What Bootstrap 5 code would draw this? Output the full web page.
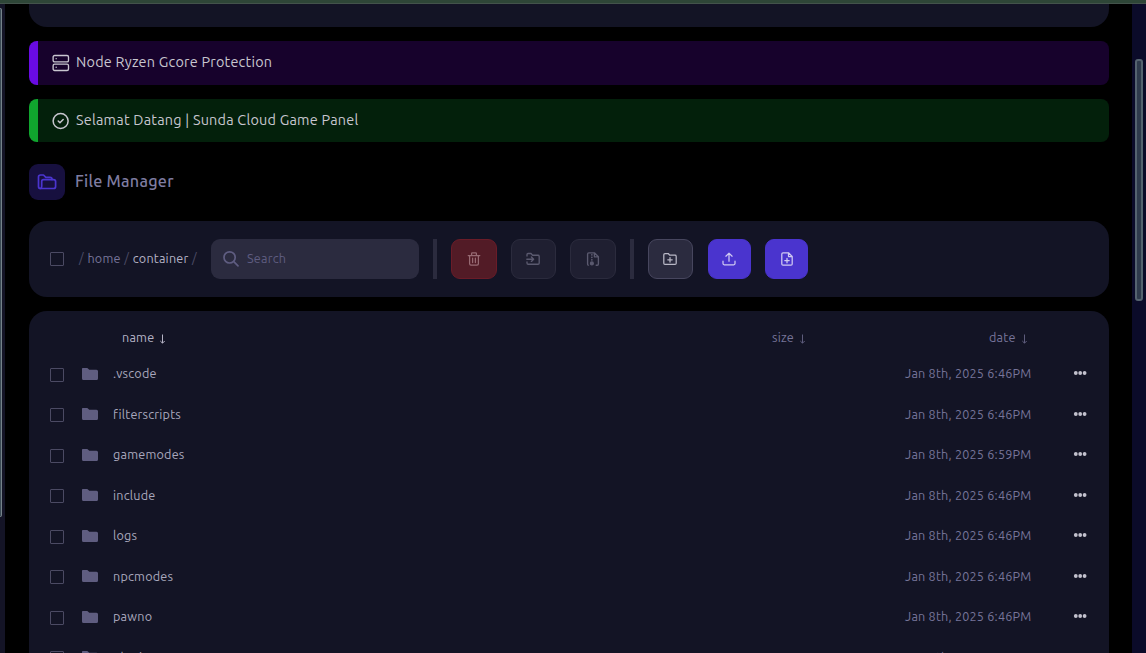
<!DOCTYPE html>
<html lang="en">
<head>
<meta charset="utf-8">
<meta name="viewport" content="width=device-width, initial-scale=1">
<title>File Manager</title>
<link href="https://cdn.jsdelivr.net/npm/bootstrap@5.3.0/dist/css/bootstrap.min.css" rel="stylesheet">
<style>
body{background:#000;font-family:Ubuntu,"Noto Sans","Open Sans",sans-serif;font-size:12.6px;letter-spacing:.216px;color:#a9a8bd;height:653px}
svg{display:block;flex:none}
.ic{fill:none;stroke:currentColor;stroke-width:2;stroke-linecap:round;stroke-linejoin:round}
.topline{height:4px;background:#2e4637;border-bottom:1px solid #43534b}
.rail{width:5px;background:#141426;padding-top:4px}
.rail-thumb{width:2px;height:509px;background:#3b4a55;border:1px solid #76838a;border-left:0;border-radius:0 2px 2px 0}
.scroller{width:14px;background:#0b0b29;padding:55px 3px 0}
.scroller-thumb{width:8px;height:242px;background:#2f3b4c;border:2px solid #55636f;border-radius:3px}
.main-col{padding:0 23px 0 24px}
.panel{background:#131425;border-radius:18px}
.panel-top{height:23px;border-radius:0 0 18px 18px}
.notice{border-left:9px solid;border-radius:8px;padding-left:14px;font-size:14.4px;letter-spacing:.23px;color:#c8c6cf}
.notice-node{height:44px;margin-top:14px;padding-bottom:1px;background:#17022c;border-color:#690be3}
.notice-ok{height:43px;margin-top:14px;background:#03200b;border-color:#10a52e}
.notice .t{margin-left:6px}
.title-row{margin:22px 0 21px}
.title-icon{width:36px;height:36px;border-radius:9px;background:#17103f;color:#4b35cf}
.title-text{font-size:16.2px;font-weight:500;letter-spacing:.25px;color:#7f7da2;margin-left:10px;padding-bottom:2px}
.tools{height:76px;padding-left:21px}
.box{width:14px;height:14px;border:1px solid #4b4a63;border-radius:1px;background:transparent;flex:none}
.crumbs{color:#4d4c66;width:132px;margin-left:15px;padding-bottom:1px;word-spacing:.5px}
.crumbs a{color:#77759a;text-decoration:none}
.crumbs .here{color:#b5b3c5}
.search{width:208px;height:40px;border-radius:9px;background:#2b2b3f;color:#5f5d81}
.search .t{margin-left:7px;padding-bottom:2px}
.bar{width:4px;height:40px;margin-left:14px;background:#2b2b3e}
.tool{height:40px;border-radius:9px;padding:0 1px 0 0;border:1px solid #2b2b3d;background:#1f1f31;color:#5b5a6f;display:flex;align-items:center;justify-content:center;margin-left:14px}
.tool-del{padding:0;background:#521b26;border-color:#6a1c28;color:#976a73}
.tool-new{background:#2b2b3f;border-color:#47465e;color:#b9b8c6}
.tool-go{background:#4a34ce;border-color:#4a34ce;color:#cfc9f2}
.files{height:342px;border-radius:18px 18px 0 0;overflow:hidden;margin-top:14px}
.heads{height:42.3px;padding-top:12px;color:#77759a}
.heads>div{height:30px}
.heads .t{padding-bottom:2px}
.arrow{margin-top:2px}
.file-row{height:40.5px;padding-left:21px;padding-right:22px}
.file-row .box{margin-top:2.4px}
.dots{margin:0 0 1px 41px}
.when{color:#77759a;width:127px;white-space:nowrap}
.t{white-space:nowrap}
</style>
</head>
<body class="d-flex flex-column overflow-hidden">
<svg width="0" height="0" class="position-absolute">
<symbol id="folder" viewBox="0 0 18 14"><path d="M1.7 1H6.3L8.3 2.8H15.5Q17 2.8 17 4.3V11.5Q17 13 15.5 13H2.5Q1 13 1 11.5V2Q1 1 1.7 1Z" fill="#5f5d80"/></symbol>
<symbol id="down" viewBox="0 0 8 10"><path d="M4.5 .5V9M2.3 7L4.5 9.2L6.7 7" fill="none" stroke="currentColor" stroke-width="1"/></symbol>
<symbol id="dots" viewBox="0 0 14 4"><g fill="#c3c2ce"><circle cx="2.8" cy="2" r="1.9"/><circle cx="7.2" cy="2" r="1.9"/><circle cx="11.6" cy="2" r="1.9"/></g></symbol>
</svg>
<div class="topline flex-shrink-0"></div>
<div class="d-flex flex-grow-1">
<aside class="rail"><div class="rail-thumb"></div></aside>
<main class="main-col flex-grow-1">
<div class="panel panel-top"></div>
<div class="notice notice-node d-flex align-items-center">
<svg class="ic" width="18" height="18" viewBox="0 0 24 24" style="stroke-width:1.8"><rect x="1.5" y="2" width="20.5" height="8.5" rx="2"/><rect x="1.5" y="13.5" width="20.5" height="8.5" rx="2"/><path d="M5.5 6.2h.1M5.5 17.7h.1"/></svg>
<span class="t">Node Ryzen Gcore Protection</span></div>
<div class="notice notice-ok d-flex align-items-center">
<svg class="ic" width="18" height="18" viewBox="0 0 24 24"><circle cx="11.5" cy="12" r="10"/><path d="M8.3 12l2.3 2.3 4.3-4.3"/></svg>
<span class="t">Selamat Datang | Sunda Cloud Game Panel</span></div>
<div class="title-row d-flex align-items-center">
<div class="title-icon d-flex align-items-center justify-content-center"><svg class="ic" width="20" height="16" viewBox="0 0 20 16" style="stroke-width:1.7"><path d="M3.5 14.5Q1.5 14.5 1.5 12.5V3Q1.5 1 3.5 1H6.5L8.8 3.3H13Q15 3.3 15 5V5.5"/><path d="M6.5 5.6H16.5Q18.6 5.6 18.6 7.6V12.5Q18.6 14.5 16.6 14.5H3.5Q4.7 14 4.7 12.3V7.6Q4.7 5.6 6.5 5.6Z"/></svg></div>
<span class="title-text t">File Manager</span></div>
<div class="panel tools d-flex align-items-center">
<span class="box"></span>
<div class="crumbs t">/ <a href="#">home</a> / <span class="here">container</span> /</div>
<div class="search d-flex align-items-center"><svg class="ic" width="18" height="18" viewBox="0 0 18 18" style="stroke-width:1.7;margin-left:11px"><circle cx="7.6" cy="7.4" r="5.6"/><path d="M11.8 11.6L16 15.8"/></svg><span class="t">Search</span></div>
<div class="bar"></div>
<button class="tool tool-del" style="width:46px"><svg class="ic" width="14" height="14" viewBox="0 0 14 14" style="stroke-width:1.25"><path d="M1.2 3.5H12.8M4.6 3.5V1.4Q4.6.8 5.2.8H8.8Q9.4.8 9.4 1.4V3.5M2.6 3.5V11.8Q2.6 13.2 4 13.2H10Q11.4 13.2 11.4 11.8V3.5M5.6 6.2V10.5M8.4 6.2V10.5"/></svg></button>
<button class="tool" style="width:45px"><svg class="ic" width="14" height="14" viewBox="0 0 14 14" style="stroke-width:1.35"><path d="M1 4V2.5Q1 1.5 2 1.5H5L6.6 3.2H12Q13.2 3.2 13.2 4.4V11Q13.2 12.2 12 12.2H2.2Q1 12.2 1 11V10M.8 7.2H7.5M5.4 5L7.6 7.2L5.4 9.4"/></svg></button>
<button class="tool" style="width:46px"><svg class="ic" width="14" height="14" viewBox="0 0 14 14" style="stroke-width:1.35"><path d="M2.2 13.2Q1.6 13 1.6 12V2Q1.6.8 2.8.8H8.4L12.4 4.8V12Q12.4 13.2 11.2 13.2H10.2M8.4 1V4.8H12.2"/><path d="M5.8 2.8h.1M5.8 5.3h.1M5.8 7.8h.1" style="stroke-width:1.7"/><circle cx="5.9" cy="11.4" r="1.4" fill="currentColor"/></svg></button>
<div class="bar"></div>
<button class="tool tool-new" style="width:45px"><svg class="ic" width="14" height="14" viewBox="0 0 14 14" style="stroke-width:1.25"><path d="M2 1.5H5.2L6.8 3.2H12Q13.2 3.2 13.2 4.4V11.2Q13.2 12.4 12 12.4H2Q.8 12.4.8 11.2V2.7Q.8 1.5 2 1.5ZM7 5.6V10M4.8 7.8H9.2"/></svg></button>
<button class="tool tool-go" style="width:43px;margin-left:15px"><svg class="ic" width="14" height="14" viewBox="0 0 14 14" style="stroke-width:1.25"><path d="M1 9.2V11.6Q1 12.8 2.2 12.8H11.8Q13 12.8 13 11.6V9.2M7 9.2V1.2M3.9 4.2L7 1.1L10.1 4.2"/></svg></button>
<button class="tool tool-go" style="width:43px;padding:0"><svg class="ic" width="14" height="14" viewBox="0 0 14 14" style="stroke-width:1.25"><path d="M8.5.8H3Q1.8.8 1.8 2V12Q1.8 13.2 3 13.2H11Q12.2 13.2 12.2 12V4.5L8.5.8V4.5H12.2M7 6.4V10.8M4.8 8.6H9.2"/></svg></button>
</div>
<div class="panel files">
<div class="heads d-flex">
<div class="d-flex align-items-center" style="margin-left:93px;width:650px;color:#b5b3c5"><span class="t" style="width:36px">name</span><svg class="arrow" width="8" height="10"><use href="#down"/></svg></div>
<div class="d-flex align-items-center" style="width:217px"><span class="t" style="width:26px">size</span><svg class="arrow opacity-75" width="8" height="10"><use href="#down"/></svg></div>
<div class="d-flex align-items-center"><span class="t" style="width:31px">date</span><svg class="arrow opacity-75" width="8" height="10"><use href="#down"/></svg></div>
</div>
<div id="rows"></div>
</div>
</main>
<aside class="scroller"><div class="scroller-thumb"></div></aside>
</div>
<script src="https://cdn.jsdelivr.net/npm/bootstrap@5.3.0/dist/js/bootstrap.bundle.min.js"></script>
<script>
document.getElementById('rows').innerHTML = ['.vscode','filterscripts','gamemodes','include','logs','npcmodes','pawno','plugins'].map(function (n) {
  return '<div class="file-row d-flex align-items-center"><span class="box"></span>' +
  '<svg width="18" height="14" style="margin-left:17px"><use href="#folder"/></svg>' +
  '<span class="t flex-grow-1" style="margin-left:14px">' + n + '</span>' +
  '<span class="when">Jan 8th, 2025 6:' + (n === 'gamemodes' ? '59' : '46') + 'PM</span>' +
  '<svg class="dots" width="14" height="4"><use href="#dots"/></svg></div>';
}).join('');
</script>
</body>
</html>
